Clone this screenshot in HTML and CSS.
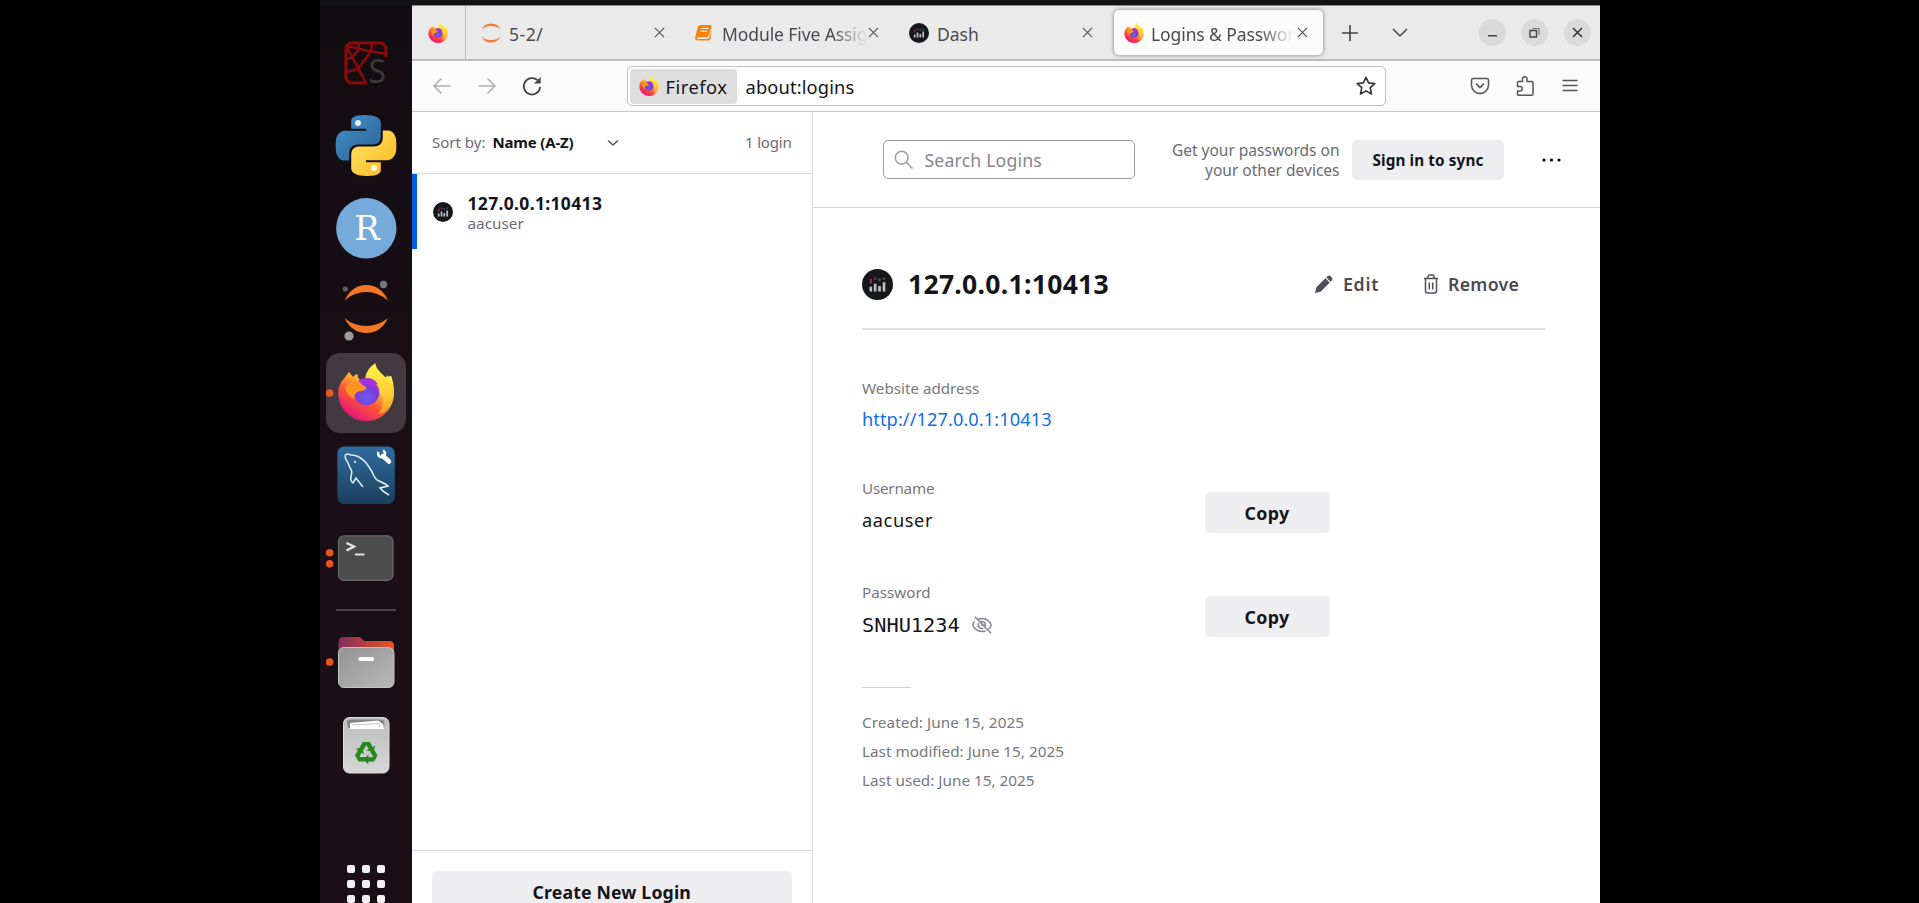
FILE: index.html
```html
<!DOCTYPE html>
<html lang="en">
<head>
<meta charset="utf-8">
<title>Logins &amp; Passwords</title>
<link rel="stylesheet" href="styles.css">
</head>
<body>
<svg class="defs" width="0" height="0">
  <defs>
    <linearGradient id="fxBody" x1="0.85" y1="0.1" x2="0.25" y2="0.95"><stop offset="0" stop-color="#fff44f"/><stop offset="0.3" stop-color="#ffb52e"/><stop offset="0.6" stop-color="#ff5634"/><stop offset="1" stop-color="#e8107f"/></linearGradient>
    <linearGradient id="fxFlame" x1="0.5" y1="0" x2="0.6" y2="1"><stop offset="0" stop-color="#fff14a"/><stop offset="0.6" stop-color="#ffcf35"/><stop offset="1" stop-color="#ff9a2a"/></linearGradient>
    <radialGradient id="fxGlobe" cx="0.5" cy="0.7" r="0.7"><stop offset="0" stop-color="#6a5cf5"/><stop offset="0.6" stop-color="#7b3bd6"/><stop offset="1" stop-color="#b833e1"/></radialGradient>
    <linearGradient id="pyBlue" x1="0" y1="0" x2="1" y2="1"><stop offset="0" stop-color="#4191cf"/><stop offset="1" stop-color="#30608f"/></linearGradient>
    <linearGradient id="pyYellow" x1="1" y1="1" x2="0" y2="0"><stop offset="0" stop-color="#ffe869"/><stop offset="1" stop-color="#fdb51c"/></linearGradient>
    <linearGradient id="sqlBg" x1="0" y1="0" x2="0" y2="1"><stop offset="0" stop-color="#2f6ca0"/><stop offset="1" stop-color="#1b3f5c"/></linearGradient>
    <linearGradient id="folderBack" x1="0" y1="0" x2="1" y2="0"><stop offset="0" stop-color="#832b5d"/><stop offset="1" stop-color="#ee5522"/></linearGradient>
    <linearGradient id="grey" x1="0" y1="0" x2="1" y2="1"><stop offset="0" stop-color="#929292"/><stop offset="1" stop-color="#b9b9b9"/></linearGradient>
    <linearGradient id="bin" x1="0" y1="0" x2="0" y2="1"><stop offset="0" stop-color="#bcbcbc"/><stop offset="1" stop-color="#d6d6d6"/></linearGradient>
    <symbol id="firefox" viewBox="0 0 56 58">
      <path d="M11 9C13 12 14 13 15 14C16 12 18 11.500 19.500 11C19 14 20 15 22 17C30 16 46 14 53 13C56 22 57 32 53.500 41C49 52 39 58 28 58C13 58 0 46 0 30C0 22 4 17 7 14C8 12 9 11 11 9Z" fill="url(#fxBody)"/>
      <path d="M27 17C27 8 33 3 37 0C38 6 42 9 46 13L48 17L49 12C54 20 57 28 55 36C53 45 47 50 40 51C46 44 46 34 40 27C37 22 31 22 27 17Z" fill="url(#fxFlame)"/>
      <circle cx="28.300" cy="29.500" r="12.800" fill="url(#fxGlobe)"/>
      <path d="M19 18.500C26 13 36 14 40 22C36 20 34 21 32 22C28 20 24 19 19 18.500Z" fill="#a531dc"/>
      <path d="M7 25C10 21 14 17 20 18L25 22.500L28.500 24.500C27 28 23 27.500 19 29C16 31 16 33 16.500 36C11 34 8 30 7 25Z" fill="#ff9420"/>
    </symbol>
    <symbol id="dash" viewBox="0 0 20 20">
      <circle cx="10" cy="10" r="10" fill="#17181c"/>
      <path d="M5.700 14.500v-3M8.500 14.500v-5M11.300 14.500v-3.500M14.200 14.500v-6" stroke="#bfc0c6" stroke-width="1.700"/>
      <path d="M5.700 9.500v-3M8.500 7v-1.500" stroke="#883044" stroke-width="1.500"/><path d="M11.300 8v-2M14.200 7v-1.500" stroke="#3b566b" stroke-width="1.500"/>
    </symbol>
    <symbol id="cross" viewBox="0 0 12 12"><path d="M1 1L11 11M11 1L1 11" stroke="currentColor" stroke-width="1.300" fill="none"/></symbol>
    <symbol id="python" viewBox="0 0 24 24"><path d="M14.25.18l.9.2.73.26.59.3.45.32.34.34.25.34.16.33.1.3.04.26.02.2-.01.13V8.500l-.05.63-.13.55-.21.46-.26.38-.3.31-.33.25-.35.19-.35.14-.33.1-.3.07-.26.04-.21.02H8.770l-.69.05-.59.14-.5.22-.41.27-.33.32-.27.35-.2.36-.15.37-.1.35-.07.32-.04.27-.02.21v3.060H3.170l-.21-.03-.28-.07-.32-.12-.35-.18-.36-.26-.36-.36-.35-.46-.32-.59-.28-.73-.21-.88-.14-1.050-.05-1.230.06-1.220.16-1.040.24-.87.32-.71.36-.57.4-.44.42-.33.42-.24.4-.16.36-.1.32-.05.24-.01h.16l.06.01h8.160v-.83H6.180l-.01-2.750-.02-.37.05-.34.11-.31.17-.28.25-.26.31-.23.38-.2.44-.18.51-.15.58-.12.64-.1.71-.06.77-.04.84-.02 1.270.05z"/></symbol>
  </defs>
</svg>
<div class="desktop">
  <nav class="dock">
    <svg class="app" viewBox="0 0 80 80">
      <g fill="none" stroke="#8b0a0c" stroke-width="2.600"><path d="M41 60H26a6 6 0 0 1-6-6V26a6 6 0 0 1 6-6H54a6 6 0 0 1 6 6V34" stroke-width="3.200"/><path d="M21 23Q40 28 60 31M21 24L40 60M33 20L32 28L25 35L20 36M46 20L45 28L32 46L20 49"/></g>
      <text class="spyder-s" x="42.500" y="60">S</text>
    </svg>
    <svg class="app" viewBox="0 0 80 80">
      <use href="#python" x="9.500" y="10" width="61" height="61" fill="url(#pyBlue)"/>
      <g transform="rotate(180 40 40.500)"><use href="#python" x="9.500" y="10" width="61" height="61" fill="url(#pyYellow)"/></g>
      <circle cx="32" cy="18" r="3" fill="#e5f2fb"/><circle cx="48" cy="63" r="3" fill="#fffbe0"/>
    </svg>
    <svg class="app" viewBox="0 0 80 80"><circle cx="40.300" cy="40.300" r="30.200" fill="#75aadb"/><text class="r-letter" x="41" y="51.500">R</text></svg>
    <svg class="app" viewBox="0 0 80 80">
      <path d="M18.500 30.500Q26 15 40.300 15Q55 15 62 30.500Q52 22 40.300 22Q28 22 18.500 30.500Z" fill="#f37726"/>
      <path d="M18.500 48Q28 56 40.300 56Q52 56 62 48Q55 63 40.300 63Q26 63 18.500 48Z" fill="#f37726"/>
      <circle cx="57.500" cy="14.500" r="3.700" fill="#767677"/><circle cx="19.300" cy="19" r="2.600" fill="#616161"/><circle cx="23" cy="66" r="4.600" fill="#9e9e9e"/>
    </svg>
    <svg class="app active" viewBox="0 0 80 80"><circle cx="3.700" cy="40" r="3.800" fill="#e95420"/><use href="#firefox" x="12" y="10" width="56.500" height="58"/></svg>
    <svg class="app" viewBox="0 0 80 80">
      <rect x="11.300" y="11.500" width="57.500" height="57.500" rx="7" fill="url(#sqlBg)"/>
      <path d="M24 33L22 28Q18 22 19.500 20Q21 18 25 20C35 20 43 30 48 41Q50 45 53 46Q60 49 62 51L54 53Q57 57 63 60M24 33Q27 36 25 41Q24 46 27 48L30 43L37 52" fill="none" stroke="#e6f1f7" stroke-width="1.500"/><circle cx="29" cy="27" r="1" fill="#fff"/>
      <path d="M57 21L63 26.500" stroke="#fff" stroke-width="4.500" stroke-linecap="round"/><path d="M52.500 17a3.500 3.500 0 1 0 4.500-1.500" fill="none" stroke="#fff" stroke-width="2.400"/>
    </svg>
    <svg class="app" viewBox="0 0 80 80"><circle cx="3.700" cy="34.700" r="3.800" fill="#e95420"/><circle cx="3.700" cy="45.700" r="3.800" fill="#e95420"/>
      <rect x="12.500" y="17.800" width="54.500" height="44.500" rx="5.500" fill="#4d4d4d" stroke="#6b6b6b" stroke-width="1.200"/><path d="M20.500 25L28 28.500L20.500 32.500" stroke="#e5e5e5" stroke-width="2.400" fill="none"/><path d="M29 36.500H38.500" stroke="#e5e5e5" stroke-width="2"/>
    </svg>
    <div class="dock-rule"></div>
    <svg class="app" viewBox="0 0 80 80"><circle cx="3.700" cy="40" r="3.800" fill="#e95420"/>
      <path d="M12.500 32V20q0-5 5-5H33q2 0 3 2l2 2H63q5 0 5 5V34Z" fill="url(#folderBack)"/><rect x="12.500" y="25.500" width="55.500" height="40" rx="5.500" fill="url(#grey)" stroke="#c4c4c4"/><rect x="32.500" y="35" width="15.500" height="4" rx="1.500" fill="#fff"/>
    </svg>
    <svg class="app" viewBox="0 0 80 80">
      <rect x="17.500" y="12.500" width="45.500" height="55.500" rx="6" fill="url(#bin)" stroke="#dedede"/><path d="M22 23L21 17Q21 14 25 14.500H54Q58 14 58.500 18L58 23Z" fill="#858585"/><path d="M24 24V18L52 15.500L57 19L58 24Z" fill="#fff"/><path d="M26 20L53 18.500L54 22" fill="none" stroke="#aaa" stroke-width=".7"/>
      <g transform="translate(40.300 48)" fill="#26891f"><g id="arrow"><path d="M-7 -5L-3.500 -11H3.500L6.500 -6L9 -7.500L7 -1L0 -2.500L2.500 -4L0 -8L-3 -2.700Z"/></g><use href="#arrow" transform="rotate(120)"/><use href="#arrow" transform="rotate(240)"/></g>
    </svg>
    <div class="grid"><i></i><i></i><i></i><i></i><i></i><i></i><i></i><i></i><i></i></div>
  </nav>
  <div class="window">
    <div class="tabs">
      <div class="pinned"><svg class="fav"><use href="#firefox"/></svg></div>
      <div class="tab tab-a"><svg class="fav" viewBox="0 0 20 20"><path d="M.500 6.500Q3 .4 10 .4Q17 .4 19.500 6.500Q16 3 10 3Q4 3 .5 6.500ZM.500 13.500Q4 17 10 17Q16 17 19.500 13.500Q17 19.600 10 19.600Q3 19.600 .5 13.500Z" fill="#f0803c"/></svg><span class="label">5-2/</span><svg class="close"><use href="#cross"/></svg></div>
      <div class="tab tab-b"><svg class="fav book" viewBox="0 0 18 17"><path d="M5.500 0H16Q18 0 17.500 2L14.500 11.500Q14 13 12.500 13H3Q1.500 13.500 2.500 14.800H13.500Q14.600 14.800 15 13.500L17.600 5L16.500 14.500Q16 16.600 14 16.600H2.500Q-.5 16.500 .2 13L3 2Q3.500 0 5.500 0Z" fill="#f8820f"/><path d="M6.500 3.700H14M5.700 6.600H13" stroke="#fff" stroke-width="1.200"/></svg><span class="label fade">Module Five Assig</span><svg class="close"><use href="#cross"/></svg></div>
      <div class="tab tab-c"><svg class="fav"><use href="#dash"/></svg><span class="label">Dash</span><svg class="close"><use href="#cross"/></svg></div>
      <div class="tab tab-d"><svg class="fav"><use href="#firefox"/></svg><span class="label fade">Logins &amp; Passwor</span><svg class="close"><use href="#cross"/></svg></div>
      <svg class="plus" viewBox="0 0 16 16"><path d="M8 0V16M0 8H16" stroke="#444" stroke-width="1.600"/></svg>
      <svg class="more" viewBox="0 0 16 10"><path d="M1 1L8 8L15 1" fill="none" stroke="#444" stroke-width="1.500"/></svg>
      <div class="controls">
        <svg viewBox="0 0 27 27"><path d="M9 16.700H18" stroke="#444" stroke-width="1.500"/></svg>
        <svg viewBox="0 0 27 27"><path d="M9 11.500H15.500V18H9Z" fill="none" stroke="#444" stroke-width="1.400"/><path d="M11.500 9.500H18V16" fill="none" stroke="#777" stroke-width="1.200"/></svg>
        <svg viewBox="0 0 27 27"><path d="M9 9L18 18M18 9L9 18" stroke="#333" stroke-width="1.500"/></svg>
      </div>
    </div>
    <div class="toolbar">
      <div class="nav">
        <svg viewBox="0 0 20 20"><path d="M18.500 10H2M9.500 2.500L2 10L9.500 17.500" fill="none" stroke="#b0b0b0" stroke-width="1.500"/></svg>
        <svg viewBox="0 0 20 20"><path d="M1.500 10H18M10.500 2.500L18 10L10.500 17.500" fill="none" stroke="#b0b0b0" stroke-width="1.500"/></svg>
        <svg viewBox="0 0 20 20"><path d="M18.200 11A8.200 8.200 0 1 1 15.500 4.200" fill="none" stroke="#444" stroke-width="1.800"/><path d="M18.700 1V7.500H12Z" fill="#444"/></svg>
      </div>
      <div class="url"><div class="identity"><svg class="fav"><use href="#firefox"/></svg><span>Firefox</span></div><span class="address">about:logins</span>
        <svg class="star" viewBox="0 0 20 20"><path d="M10 1.300L12.600 6.900L18.800 7.600L14.200 11.700L15.500 18L10 14.900L4.500 18L5.800 11.700L1.200 7.600L7.400 6.900Z" fill="none" stroke="#333" stroke-width="1.600" stroke-linejoin="round"/></svg>
      </div>
      <div class="actions">
        <svg viewBox="0 0 20 20"><path d="M3 2.500H17Q18.500 2.500 18.500 4V9A8.500 8.500 0 0 1 1.500 9V4Q1.500 2.500 3 2.500Z" fill="none" stroke="#555" stroke-width="1.500"/><path d="M6 7.500L10 11.500L14 7.500" fill="none" stroke="#555" stroke-width="1.700"/></svg>
        <svg viewBox="0 0 20 20"><path d="M2.500 8V6.500Q2.500 5.500 3.500 5.500H7.500V3Q7.500 .8 9.700 .8T12 3V5.500H16.500Q18 5.500 18 7V18Q18 19.200 16.500 19.200H3.500Q2.500 19.200 2.500 18V15H5Q7.200 15 7.200 12.700T5 10.500H2.500Z" fill="none" stroke="#555" stroke-width="1.500" stroke-linejoin="round"/></svg>
        <svg viewBox="0 0 20 20"><path d="M2.500 4.500H17.500M2.500 9.500H17.500M2.500 14.500H17.500" stroke="#555" stroke-width="1.500"/></svg>
      </div>
    </div>
    <div class="content">
      <aside class="sidebar">
        <div class="sort"><span>Sort by:</span><b>Name (A-Z)</b><svg class="chev" viewBox="0 0 12 8"><path d="M1 1.500L6 6L11 1.500" fill="none" stroke="#5b5b66" stroke-width="1.500"/></svg><span class="count">1 login</span></div>
        <div class="item"><svg class="fav"><use href="#dash"/></svg><div class="item-text"><b>127.0.0.1:10413</b><span>aacuser</span></div></div>
        <div class="create"><div class="button big">Create New Login</div></div>
      </aside>
      <main class="main">
        <header class="head">
          <div class="search"><svg viewBox="0 0 20 20"><circle cx="7.700" cy="7.700" r="6.400" fill="none" stroke="#9a9a9f" stroke-width="1.500"/><path d="M12.300 12.300L18.500 18.500" stroke="#9a9a9f" stroke-width="1.600"/></svg><span>Search Logins</span></div>
          <div class="promo"><span>Get your passwords on</span><span>your other devices</span></div>
          <div class="button sync">Sign in to sync</div>
          <svg class="dots" viewBox="0 0 20 4"><circle cx="2" cy="2" r="1.600"/><circle cx="9.500" cy="2" r="1.600"/><circle cx="17" cy="2" r="1.600"/></svg>
        </header>
        <section class="detail">
          <div class="title"><svg class="big-fav"><use href="#dash"/></svg><h1>127.0.0.1:10413</h1>
            <div class="act edit"><svg viewBox="0 0 20 20"><path d="M1 19L2.500 13L12 3.500L16.500 8L7 17.500ZM13 2.500L14.500 1Q16 0 17.500 1.200L18.800 2.500Q20 4 19 5.500L17.500 7Z" fill="#4f4f57"/></svg><span>Edit</span></div>
            <div class="act remove"><svg viewBox="0 0 16 20"><path d="M1 4.500H15M2.500 4.500V17Q2.500 19 4.500 19H11.500Q13.500 19 13.500 17V4.500M5 4V2.500Q5 1 6.500 1H9.500Q11 1 11 2.500V4M6.300 8.500V15.500M9.700 8.500V15.500" fill="none" stroke="#4f4f57" stroke-width="1.500"/></svg><span>Remove</span></div>
          </div>
          <div class="field site"><div><label>Website address</label><a class="value">http://127.0.0.1:10413</a></div></div>
          <div class="field user"><div><label>Username</label><span class="value">aacuser</span></div><div class="button copy">Copy</div></div>
          <div class="field pass"><div><label>Password</label><div class="secret"><span class="mono">SNHU1234</span><svg viewBox="0 0 20 20"><path d="M2.500 6.500Q.8 8.500 .8 10Q3 16.200 10 16.500Q12 16.500 13.500 16M6 4.300Q8 3.600 10 3.600Q17 4 19.200 10Q18.500 12.300 16.700 14M6.600 8Q5.500 11 7.500 12.700Q9 14 11.300 13.300M9 6.500Q13.500 6.500 13.500 10.500L10 10Z M2.800 1.800L19 18.300" fill="none" stroke="#86868c" stroke-width="1.500"/></svg></div></div><div class="button copy">Copy</div></div>
          <div class="meta"><span class="created">Created: June 15, 2025</span><span>Last modified: June 15, 2025</span><span>Last used: June 15, 2025</span></div>
        </section>
      </main>
    </div>
  </div>
</div>
</body>
</html>
```
FILE: styles.css
```css
* { box-sizing: border-box; }
body { margin: 0; background: #000; font-family: "Noto Sans", "Open Sans", sans-serif; color: #15141a; overflow: hidden; }
svg { display: block; flex: none; }
.defs { position: absolute; }

.desktop { width: 1280px; height: 903px; margin-left: 320px; padding-top: 5px; background: #141414; display: flex; }

/* Dock */
.dock { width: 92px; background: linear-gradient(#120d11, #1a0f16 50%, #1a0f16); display: flex; flex-direction: column; align-items: center; padding-top: 17.500px; gap: 2.600px; overflow: hidden; flex: none; }
.app { width: 80px; height: 80px; }
.app.active { background: #423a40; border-radius: 14px; }
.spyder-s { font: 32px "Noto Sans", sans-serif; fill: #3a3a3a; }
.r-letter { font: 34px "DejaVu Serif", serif; fill: #fff; text-anchor: middle; }
.dock-rule { width: 60px; height: 2px; background: #4a4449; margin: 8px 0 9px; flex: none; }
.grid { display: grid; grid-template-columns: repeat(3, 8px); gap: 7px; margin-top: 78px; }
.grid i { height: 8px; background: #f0f0f0; border-radius: 2px; }

/* Browser chrome */
.window { flex: 1; min-width: 0; background: #fff; display: flex; flex-direction: column; white-space: nowrap; }
.tabs { height: 56px; background: #eaeaea; border-top: 1px solid #8a8a8a; border-bottom: 2px solid #bdbdbd; display: flex; align-items: center; flex: none; }
.fav { width: 20px; height: 20px; }
.pinned { width: 54px; height: 100%; padding-left: 15.500px; display: flex; align-items: center; border-right: 1px solid #b9b9b9; }
.tab { display: flex; align-items: center; height: 45px; font-size: 17.500px; color: #4a4a4f; padding-left: 15px; flex: none; }
.label { margin-left: 8px; line-height: 30px; padding-top: 2px; }
.close { width: 11px; height: 11px; margin-left: auto; color: #555; }
.fade { -webkit-mask-image: linear-gradient(90deg, #000 76%, transparent); mask-image: linear-gradient(90deg, #000 76%, transparent); }
.tab-a { width: 199px; letter-spacing: .5px; }
.tab-b { width: 214px; padding-left: 30px; letter-spacing: -.1px; }
.tab-b .fade { margin-left: 10px; }
.book { width: 17px; height: 16px; }
.tab-c { width: 214px; padding-left: 30px; }
.tab-d { width: 209px; margin-left: 21px; padding: 0 15px 0 10px; background: #fcfcfc; border-radius: 5px; box-shadow: 0 0 4px #777; letter-spacing: -.1px; }
.tab-d .label { margin-left: 7px; }
.plus { width: 16px; height: 16px; margin-left: 18.500px; }
.more { width: 16px; height: 10px; margin-left: 34px; }
.controls { display: flex; gap: 15.500px; margin-left: 71px; }
.controls svg { width: 27px; height: 27px; border-radius: 50%; background: #dadada; }
.toolbar { height: 51px; background: #fbfbfb; border-bottom: 1px solid #c6c6c6; display: flex; align-items: center; flex: none; }
.nav { display: flex; gap: 25px; padding-left: 20px; width: 214.500px; }
.nav svg { width: 20px; height: 20px; }
.url { width: 759px; height: 40px; border: 1px solid #bfbfbf; border-radius: 5px; background: #fff; display: flex; align-items: center; font-size: 18.300px; padding-left: 2px; }
.identity { width: 107px; height: 35px; background: #dedede; border-radius: 4px; display: flex; align-items: center; padding-left: 9px; gap: 7px; letter-spacing: .5px; }
.address { margin-left: 9px; letter-spacing: .15px; }
.star { width: 20px; height: 20px; margin: 0 9px 0 auto; }
.actions { display: flex; gap: 25px; margin-left: 84.500px; }
.actions svg { width: 20px; height: 20px; }

/* Login list */
.content { flex: 1; min-height: 0; display: flex; }
.sidebar { width: 400.500px; border-right: 1px solid #dedee2; display: flex; flex-direction: column; flex: none; }
.sort { height: 62px; border-bottom: 1px solid #dcdcdf; display: flex; align-items: center; padding: 0 20px 2px; font-size: 15px; color: #6b6b74; flex: none; }
.sort b { margin-left: 7px; color: #15141a; letter-spacing: -.16px; }
.chev { width: 12px; height: 8px; margin: 3px 0 0 33px; }
.count { margin-left: auto; letter-spacing: -.2px; }
.item { height: 75px; border-left: 5px solid #0060df; display: flex; align-items: center; padding-left: 15.500px; flex: none; }
.item-text { display: flex; flex-direction: column; margin-left: 15px; }
.item-text b { font-size: 17.500px; line-height: 21px; padding-top: 1px; letter-spacing: .33px; }
.item-text span { font-size: 15.300px; line-height: 18px; color: #6b6b74; }
.create { margin-top: auto; height: 53px; border-top: 1px solid #dcdcdf; padding: 20px 20px 0; overflow: hidden; flex: none; }
.button { background: #eeeef0; border-radius: 5px; display: flex; align-items: center; justify-content: center; font-weight: 700; flex: none; }
.big { height: 41px; font-size: 17.700px; letter-spacing: .15px; }

/* Selected login */
.main { flex: 1; min-width: 0; }
.head { height: 96px; border-bottom: 1px solid #d5d5d9; display: flex; align-items: center; padding-left: 70px; }
.search { width: 252px; height: 39px; border: 1px solid #9b9ba0; border-radius: 5px; display: flex; align-items: center; padding-left: 10px; gap: 11px; font-size: 17.700px; letter-spacing: .15px; color: #86868c; }
.search svg { width: 20px; height: 20px; }
.promo { width: 205px; display: flex; flex-direction: column; align-items: flex-end; font-size: 15.500px; line-height: 20px; color: #6b6b74; }
.sync { width: 152px; height: 40px; margin-left: 12.500px; font-size: 15.300px; letter-spacing: .1px; }
.dots { width: 20px; height: 4px; margin-left: 38px; }
.detail { padding: 0 55px 0 49.500px; }
.title { height: 122px; border-bottom: 2px solid #e0e0e3; display: flex; align-items: center; padding: 33px 0 1px; }
.big-fav { width: 31px; height: 31px; }
h1 { font-size: 26.500px; line-height: 36px; letter-spacing: .3px; margin: 0 0 0 15px; width: 204px; }
.act { display: flex; align-items: center; font-weight: 600; font-size: 17.800px; color: #4a4a50; }
.edit { margin-left: 202px; width: 109px; gap: 10px; letter-spacing: .7px; }
.edit svg { width: 19px; height: 19px; }
.remove { gap: 9px; letter-spacing: .25px; }
.remove svg { width: 16px; height: 20px; }
.field { display: flex; align-items: flex-start; }
.field > div:first-child { width: 342.500px; }
label { display: block; font-size: 15.200px; line-height: 20px; color: #77777d; }
.user label { letter-spacing: -.2px; }
.value { display: block; font-size: 18.200px; line-height: 24px; }
.site { height: 101px; padding-top: 48px; }
.site .value { color: #0f6fe6; margin-top: 9px; letter-spacing: .08px; }
.user { height: 102px; padding-top: 47px; }
.user .value { margin-top: 10px; letter-spacing: .6px; }
.pass { height: 104px; padding-top: 49px; }
.copy { width: 125px; height: 41px; margin-top: 14px; font-size: 17.800px; letter-spacing: .4px; }
.secret { display: flex; align-items: center; gap: 12px; margin-top: 10px; height: 26px; }
.secret svg { width: 20px; height: 20px; }
.mono { font: 20.300px "DejaVu Sans Mono", monospace; }
.meta { display: flex; flex-direction: column; font-size: 15.300px; line-height: 29px; color: #77777d; margin-top: 50px; }
.meta::before { content: ""; width: 49px; height: 1px; background: #cfcfd3; margin-bottom: 20px; }
.created { letter-spacing: .06px; }
```
